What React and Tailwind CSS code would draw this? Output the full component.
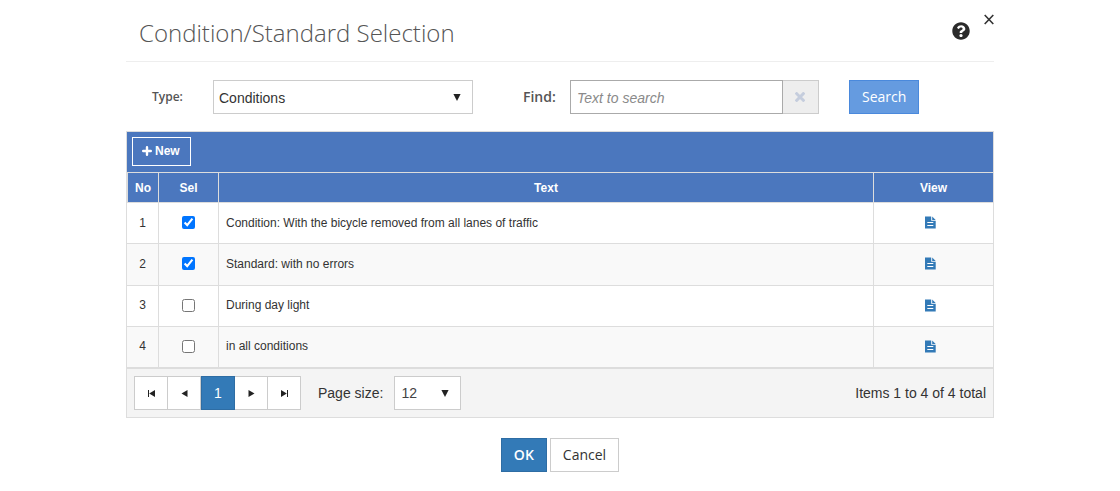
import { useState } from "react";
import { FaQuestionCircle } from "react-icons/fa";

const initialRows = [
  { id: 1, text: "Condition: With the bicycle removed from all lanes of traffic", selected: true },
  { id: 2, text: "Standard: with no errors", selected: true },
  { id: 3, text: "During day light", selected: false },
  { id: 4, text: "in all conditions", selected: false },
];

function Caret({ className }) {
  return (
    <svg viewBox="0 0 8 7" className={`pointer-events-none absolute h-[7px] w-2 ${className}`} aria-hidden="true">
      <path d="M0.4 0H7.6L4 7Z" fill="#222" />
    </svg>
  );
}

function PlusIcon() {
  return (
    <svg viewBox="0 0 10 10" className="size-[10px]" aria-hidden="true">
      <path d="M5 1.2V8.8M1.2 5H8.8" stroke="currentColor" strokeWidth="2.4" strokeLinecap="round" />
    </svg>
  );
}

function ClearIcon() {
  return (
    <svg viewBox="0 0 10 10" className="size-[10px]" aria-hidden="true">
      <path d="M1.7 1.7L8.3 8.3M8.3 1.7L1.7 8.3" stroke="#c5cddd" strokeWidth="3" strokeLinecap="square" />
    </svg>
  );
}

function FileIcon() {
  return (
    <svg viewBox="0 0 11 13" className="h-[13px] w-[11px]" aria-hidden="true">
      <path d="M0 0.5H6.2V4.7H10.7V12.5H0Z" fill="#337ab7" />
      <path d="M7.2 0.5L10.7 3.9H7.2Z" fill="#337ab7" />
      <path d="M2.3 6.5H8.3M2.3 9.5H8.3" stroke="#fff" strokeWidth="1" />
    </svg>
  );
}

const pagerShapes = {
  first: "M1 1H2V8H1ZM8 1V8L2.2 4.5Z",
  previous: "M7.5 1V8L1.5 4.5Z",
  next: "M1.5 1V8L7.5 4.5Z",
  last: "M7 1H8V8H7ZM1 1V8L6.8 4.5Z",
};

function PagerButton({ kind, label }) {
  return (
    <button type="button" aria-label={label} className="flex w-[33px] items-center justify-center border-r border-[#ccc] bg-white last:w-8 last:border-r-0">
      <svg viewBox="0 0 9 9" className="size-[9px]" aria-hidden="true">
        <path d={pagerShapes[kind]} fill="#222" />
      </svg>
    </button>
  );
}

export default function App() {
  const [rows, setRows] = useState(initialRows);
  const toggle = (id) =>
    setRows(rows.map((row) => (row.id === id ? { ...row, selected: !row.selected } : row)));

  return (
    <main className="mx-auto w-full max-w-[868px] bg-white pb-5 font-['Liberation_Sans',Arial,sans-serif] text-sm text-[#333]">
      <header className="flex h-[62px] items-start border-b border-[#eee] pl-[13px]">
        <h1 className="grow pt-4 font-['Open_Sans',sans-serif] text-2xl leading-[34px] font-light text-[#555]">
          Condition/Standard Selection
        </h1>
        <button type="button" aria-label="Help" className="mt-[22px] mr-[14px]">
          <FaQuestionCircle className="size-[18px] text-[#2b2b2b]" />
        </button>
        <button type="button" aria-label="Close" className="mt-[14px]">
          <svg viewBox="0 0 10 11" className="h-[11px] w-[10px]" aria-hidden="true">
            <path d="M0.7 1L9.3 10M9.3 1L0.7 10" stroke="#333" strokeWidth="1.6" />
          </svg>
        </button>
      </header>

      <form className="flex h-[69px] items-center" onSubmit={(e) => e.preventDefault()}>
        <label htmlFor="type" className="w-[87px] pl-[26px] font-['Open_Sans',sans-serif] text-xs font-semibold text-[#555]">
          Type:
        </label>
        <div className="relative w-[260px]">
          <select id="type" className="h-[34px] w-full appearance-none border border-[#ccc] bg-white px-[5px] pt-0.5 text-sm">
            <option>Conditions</option>
          </select>
          <Caret className="top-[14px] right-3" />
        </div>
        <label htmlFor="find" className="w-[97px] pl-[50px] font-['Open_Sans',sans-serif] text-sm font-semibold text-[#555]">
          Find:
        </label>
        <div className="flex h-[34px] w-[249px]">
          <input
            id="find"
            type="text"
            placeholder="Text to search"
            className="w-[213px] border border-[#aaa] px-1.5 pt-0.5 text-sm placeholder:text-[#8a8a8a] placeholder:italic"
          />
          <button type="button" aria-label="Clear" className="flex grow items-center justify-center border border-l-0 border-[#ccc] bg-[#eee] pr-px">
            <ClearIcon />
          </button>
        </div>
        <button type="submit" className="ml-[30px] h-[34px] border border-[#4a89dc] bg-[#659be0] px-3 font-['Open_Sans',sans-serif] text-sm text-white">
          Search
        </button>
      </form>

      <section className="border border-[#ddd]">
        <div className="flex h-10 items-start bg-[#4b77be] p-[5px]">
          <button type="button" className="flex h-[29px] items-center gap-[3px] border border-white pr-2.5 pl-[9px] pb-0.5 text-xs font-bold text-white">
            <PlusIcon />
            New
          </button>
        </div>

        <table className="h-[195px] w-full table-fixed border-separate border-spacing-0 text-xs">
          <colgroup>
            <col className="w-8" />
            <col className="w-[60px]" />
            <col />
            <col className="w-[119px]" />
          </colgroup>
          <thead>
            <tr className="h-[30px] bg-[#4b77be] text-white">
              {["No", "Sel", "Text", "View"].map((name) => (
                <th key={name} className="h-[30px] border-t border-r border-[#ddd] p-0 font-bold first:border-l last:border-r-0">
                  {name}
                </th>
              ))}
            </tr>
          </thead>
          <tbody>
            {rows.map((row) => (
              <tr key={row.id} className="even:bg-[#f9f9f9]">
                <td className="border-t border-r border-[#ddd] px-0 pt-0 pb-px text-center">{row.id}</td>
                <td className="border-t border-r border-[#ddd] px-0 pt-0 pb-px text-center">
                  <input
                    type="checkbox"
                    aria-label={`Select ${row.text}`}
                    checked={row.selected}
                    onChange={() => toggle(row.id)}
                    className="mx-auto block size-[13px]"
                  />
                </td>
                <td className="border-t border-r border-[#ddd] px-[7px] pt-0 pb-px">{row.text}</td>
                <td className="border-t border-[#ddd] px-0 pt-0 pb-px">
                  <a href="#view" aria-label={`View ${row.text}`} className="flex justify-center pr-[7px]">
                    <FileIcon />
                  </a>
                </td>
              </tr>
            ))}
          </tbody>
        </table>

        <footer className="flex h-[50px] items-center border-t-2 border-[#ddd] bg-[#f4f4f4] px-[7px]">
          <nav aria-label="Pages" className="flex h-[34px] border border-[#ccc]">
            <PagerButton kind="first" label="First page" />
            <PagerButton kind="previous" label="Previous page" />
            <button type="button" aria-current="page" className="-my-px w-[34px] border border-[#2e6da4] bg-[#337ab7] text-white">
              1
            </button>
            <PagerButton kind="next" label="Next page" />
            <PagerButton kind="last" label="Last page" />
          </nav>
          <label htmlFor="size" className="mr-[11px] ml-[17px] pb-px">
            Page size:
          </label>
          <div className="relative w-[67px]">
            <select id="size" className="h-[34px] w-full appearance-none border border-[#ccc] bg-white px-1.5 text-sm text-[#444]">
              <option>12</option>
            </select>
            <Caret className="top-[14px] right-3" />
          </div>
          <p className="ml-auto">Items 1 to 4 of 4 total</p>
        </footer>
      </section>

      <div className="flex justify-center gap-[3px] pt-5 font-['Open_Sans',sans-serif] text-sm">
        <button type="button" className="h-[34px] border border-[#2e6da4] bg-[#337ab7] px-3 font-semibold text-white">OK</button>
        <button type="button" className="h-[34px] border border-[#ccc] bg-white px-3">Cancel</button>
      </div>
    </main>
  );
}
